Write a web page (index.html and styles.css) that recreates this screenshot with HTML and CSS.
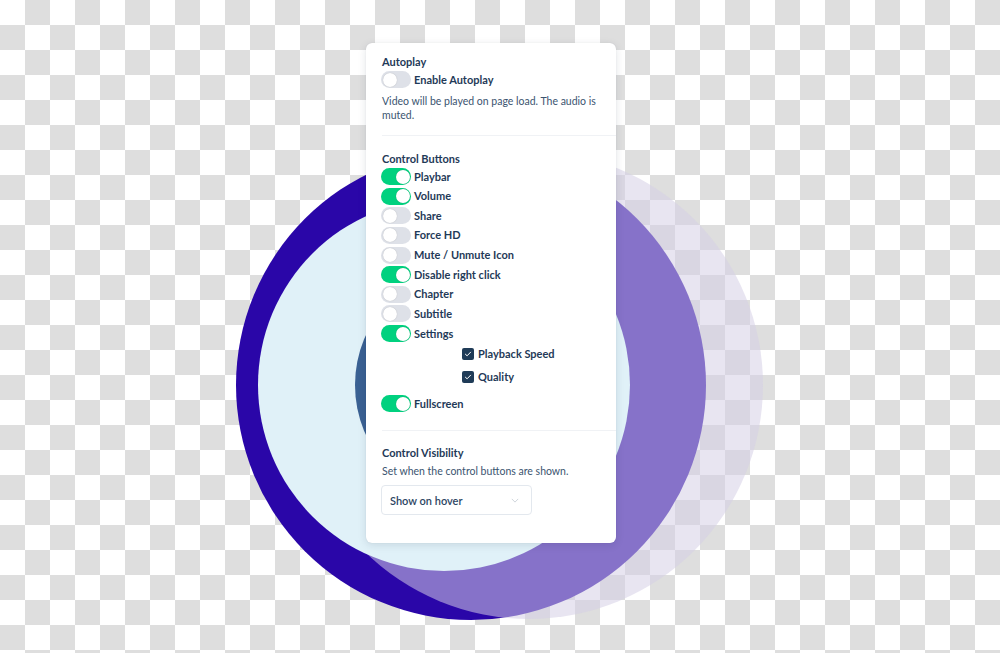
FILE: index.html
```html
<!DOCTYPE html>
<html lang="en">
<head>
<meta charset="utf-8">
<title>Player settings</title>
<link rel="stylesheet" href="styles.css">
</head>
<body>
<div class="stage">
  <div class="disc disc-outer"></div>
  <div class="disc disc-halo"></div>
  <div class="disc disc-inner"></div>
  <div class="disc disc-core"></div>

  <div class="card">
    <section class="sec sec-autoplay">
      <h3 class="title">Autoplay</h3>
      <div class="row"><span class="toggle"></span><span class="label">Enable Autoplay</span></div>
      <p class="desc">Video will be played on page load. The audio is muted.</p>
    </section>

    <section class="sec sec-buttons">
      <h3 class="title">Control Buttons</h3>
      <div class="rows">
        <div class="row"><span class="toggle on"></span><span class="label">Playbar</span></div>
        <div class="row"><span class="toggle on"></span><span class="label">Volume</span></div>
        <div class="row"><span class="toggle"></span><span class="label">Share</span></div>
        <div class="row"><span class="toggle"></span><span class="label">Force HD</span></div>
        <div class="row"><span class="toggle"></span><span class="label">Mute / Unmute Icon</span></div>
        <div class="row"><span class="toggle on"></span><span class="label">Disable right click</span></div>
        <div class="row"><span class="toggle"></span><span class="label">Chapter</span></div>
        <div class="row"><span class="toggle"></span><span class="label">Subtitle</span></div>
        <div class="row"><span class="toggle on"></span><span class="label">Settings</span></div>
      </div>
      <div class="checks">
        <div class="check-row"><span class="checkbox"><svg viewBox="0 0 12 12" width="12" height="12"><path d="M3.4 6.2 5.1 7.8 8.6 4.2" fill="none" stroke="#ffffff" stroke-width="1" stroke-linecap="round" stroke-linejoin="round"/></svg></span><span class="label">Playback Speed</span></div>
        <div class="check-row"><span class="checkbox"><svg viewBox="0 0 12 12" width="12" height="12"><path d="M3.4 6.2 5.1 7.8 8.6 4.2" fill="none" stroke="#ffffff" stroke-width="1" stroke-linecap="round" stroke-linejoin="round"/></svg></span><span class="label">Quality</span></div>
      </div>
      <div class="row row-last"><span class="toggle on"></span><span class="label">Fullscreen</span></div>
    </section>

    <section class="sec sec-visibility">
      <h3 class="title">Control Visibility</h3>
      <p class="desc">Set when the control buttons are shown.</p>
      <div class="select">
        <span class="select-text">Show on hover</span>
        <svg class="chev" viewBox="0 0 10 6" width="8" height="5"><path d="M1 1 5 5 9 1" fill="none" stroke="#c3cad3" stroke-width="1"/></svg>
      </div>
    </section>
  </div>
</div>
</body>
</html>
```

FILE: styles.css
```css
* { box-sizing: border-box; }

html, body {
  margin: 0;
  padding: 0;
}

body {
  width: 1000px;
  height: 653px;
  overflow: hidden;
  background-color: #ffffff;
  background-image: repeating-conic-gradient(#dedede 0 25%, #ffffff 0 50%);
  background-size: 50px 50px;
  background-position: 0 0;
  font-family: "Lato", "Open Sans", "Liberation Sans", sans-serif;
}

.stage {
  position: relative;
  width: 1000px;
  height: 653px;
}

.disc {
  position: absolute;
  border-radius: 50%;
}

.disc-outer {
  left: 236px;
  top: 150px;
  width: 470px;
  height: 470px;
  background: #2a06a8;
}

.disc-halo {
  left: 295px;
  top: 151px;
  width: 468px;
  height: 468px;
  background: rgba(212, 207, 229, 0.54);
}

.disc-inner {
  left: 258px;
  top: 199px;
  width: 372px;
  height: 372px;
  background: #e0f1f8;
}

.disc-core {
  left: 355px;
  top: 265px;
  width: 240px;
  height: 240px;
  background: #3a6193;
}

.card {
  position: absolute;
  left: 366px;
  top: 43px;
  width: 250px;
  height: 500px;
  background: #ffffff;
  border-radius: 6px;
  box-shadow: 0 2px 8px rgba(20, 30, 60, 0.12), 0 0 1px rgba(20, 30, 60, 0.15);
  display: flex;
  flex-direction: column;
  color: #1f3a58;
}

.sec {
  margin-left: 16px;
  display: flex;
  flex-direction: column;
}

.sec + .sec {
  border-top: 1px solid #f0f2f5;
}

.sec-autoplay {
  padding: 11px 0 13px 0;
}

.sec-buttons {
  padding: 15px 0 18px 0;
}

.sec-visibility {
  padding: 14px 0 0 0;
}

.title {
  margin: 0;
  font-size: 11px;
  line-height: 15px;
  font-weight: 700;
  color: #1f3a58;
}

.desc {
  margin: 0;
  font-size: 10.5px;
  line-height: 14px;
  font-weight: 400;
  color: #3b5470;
  padding-right: 8px;
}

.sec-autoplay .row {
  margin-top: 2px;
  margin-bottom: 6px;
}

.sec-buttons .rows {
  display: flex;
  flex-direction: column;
  gap: 2.625px;
  margin-top: 2px;
}

.row {
  display: flex;
  align-items: center;
  gap: 3px;
  height: 17px;
}

.label {
  font-size: 11px;
  font-weight: 700;
  color: #1f3a58;
  line-height: 14px;
}

.toggle {
  position: relative;
  flex: none;
  width: 30px;
  height: 17px;
  border-radius: 9px;
  background: #dee1e8;
  margin-left: -1px;
}

.toggle::after {
  content: "";
  position: absolute;
  top: 1.5px;
  left: 1.5px;
  width: 14px;
  height: 14px;
  border-radius: 50%;
  background: #ffffff;
  box-shadow: 0 0 1px rgba(0, 0, 0, 0.25);
}

.toggle.on {
  background: #00d17f;
}

.toggle.on::after {
  left: 14.5px;
}

.checks {
  display: flex;
  flex-direction: column;
  gap: 9px;
  padding-left: 80px;
  margin-top: 4.5px;
}

.check-row {
  display: flex;
  align-items: center;
  gap: 4px;
  height: 14px;
}

.checkbox {
  flex: none;
  width: 12px;
  height: 12px;
  border-radius: 2px;
  background: #1f3b57;
  display: flex;
  align-items: center;
  justify-content: center;
}

.checkbox svg {
  display: block;
}

.row-last {
  margin-top: 11.5px;
}

.sec-visibility .desc {
  margin-top: 4px;
}

.select {
  margin-top: 7px;
  width: 151px;
  height: 30px;
  margin-left: -1px;
  border: 1px solid #e3e8ee;
  border-radius: 4px;
  display: flex;
  align-items: center;
  justify-content: space-between;
  padding: 0 12px 0 8px;
}

.select-text {
  font-size: 11px;
  font-weight: 600;
  color: #2c4562;
}

.chev {
  display: block;
}
```
